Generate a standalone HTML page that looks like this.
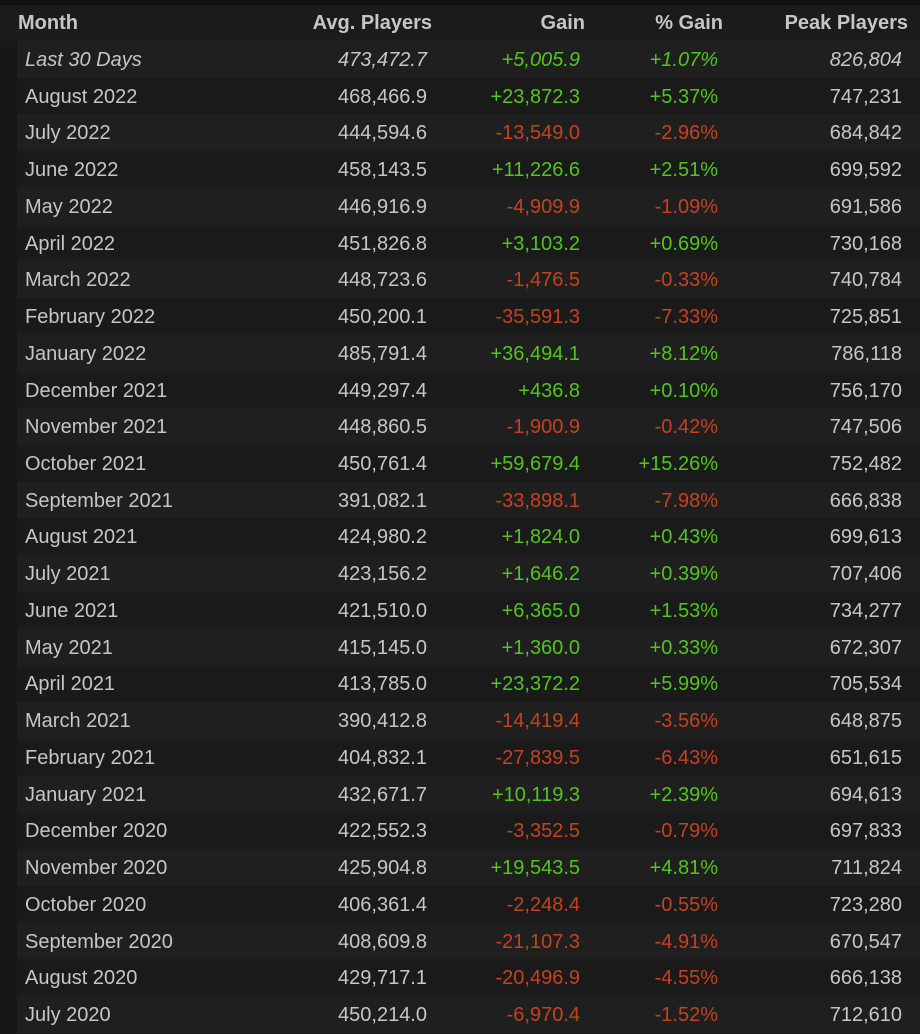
<!DOCTYPE html>
<html><head><meta charset="utf-8"><style>
html,body{margin:0;padding:0;background:#171717;width:920px;height:1024px;overflow:hidden}
body{font-family:"Liberation Sans",Arial,sans-serif;color:#c6c6c6;font-size:20px}
.top{height:5px;background:#121212}
.hdr{position:absolute;left:0;top:5px;width:920px;height:36px;background:#1b1b1b;font-weight:bold;font-size:20px}
.row{position:absolute;left:17px;width:903px;height:37px}
.e{background:#1f1f1f}.o{background:#1a1a1a}
.c{position:absolute;white-space:nowrap;line-height:38px}
.m{left:8px}.a{right:493px;text-align:right}.g{right:340px}.p{right:202px}.k{right:18px}
.hdr .m{left:18px}.hdr .a{right:488px}.hdr .g{right:335px}.hdr .p{right:197px}.hdr .k{right:12px}
.hdr .c{line-height:36px}
.gr{color:#52c41f}.rd{color:#c4421f}
.it{font-style:italic}
</style></head><body>
<div class="top"></div>
<div class="hdr"><span class="c m">Month</span><span class="c a">Avg. Players</span><span class="c g">Gain</span><span class="c p">% Gain</span><span class="c k">Peak Players</span></div>
<div id="t"></div>
<script>
var d=[["Last 30 Days","473,472.7","+5,005.9","+1.07%","826,804"],
["August 2022","468,466.9","+23,872.3","+5.37%","747,231"],
["July 2022","444,594.6","-13,549.0","-2.96%","684,842"],
["June 2022","458,143.5","+11,226.6","+2.51%","699,592"],
["May 2022","446,916.9","-4,909.9","-1.09%","691,586"],
["April 2022","451,826.8","+3,103.2","+0.69%","730,168"],
["March 2022","448,723.6","-1,476.5","-0.33%","740,784"],
["February 2022","450,200.1","-35,591.3","-7.33%","725,851"],
["January 2022","485,791.4","+36,494.1","+8.12%","786,118"],
["December 2021","449,297.4","+436.8","+0.10%","756,170"],
["November 2021","448,860.5","-1,900.9","-0.42%","747,506"],
["October 2021","450,761.4","+59,679.4","+15.26%","752,482"],
["September 2021","391,082.1","-33,898.1","-7.98%","666,838"],
["August 2021","424,980.2","+1,824.0","+0.43%","699,613"],
["July 2021","423,156.2","+1,646.2","+0.39%","707,406"],
["June 2021","421,510.0","+6,365.0","+1.53%","734,277"],
["May 2021","415,145.0","+1,360.0","+0.33%","672,307"],
["April 2021","413,785.0","+23,372.2","+5.99%","705,534"],
["March 2021","390,412.8","-14,419.4","-3.56%","648,875"],
["February 2021","404,832.1","-27,839.5","-6.43%","651,615"],
["January 2021","432,671.7","+10,119.3","+2.39%","694,613"],
["December 2020","422,552.3","-3,352.5","-0.79%","697,833"],
["November 2020","425,904.8","+19,543.5","+4.81%","711,824"],
["October 2020","406,361.4","-2,248.4","-0.55%","723,280"],
["September 2020","408,609.8","-21,107.3","-4.91%","670,547"],
["August 2020","429,717.1","-20,496.9","-4.55%","666,138"],
["July 2020","450,214.0","-6,970.4","-1.52%","712,610"]];
var h="";
d.forEach(function(r,i){var top=41+i*36.73;var cl=r[2][0]=="+"?"gr":"rd";
h+='<div class="row '+(i%2?'o':'e')+(i==0?' it':'')+'" style="top:'+top+'px"><span class="c m">'+r[0]+'</span><span class="c a">'+r[1]+'</span><span class="c g '+cl+'">'+r[2]+'</span><span class="c p '+cl+'">'+r[3]+'</span><span class="c k">'+r[4]+'</span></div>';});
document.getElementById("t").innerHTML=h;
</script>
</body></html>
